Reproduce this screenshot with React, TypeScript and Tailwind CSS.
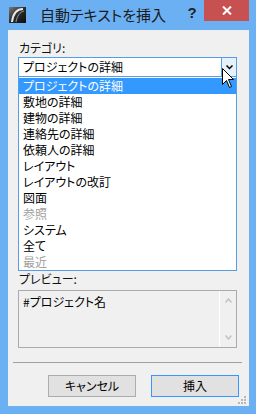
import React from "react";

const JP = { fontFamily: '"Noto Sans CJK JP", "Noto Sans", sans-serif', fontFeatureSettings: '"palt"' };

const ITEMS: { label: string; disabled?: boolean }[] = [
  { label: "プロジェクトの詳細" },
  { label: "敷地の詳細" },
  { label: "建物の詳細" },
  { label: "連絡先の詳細" },
  { label: "依頼人の詳細" },
  { label: "レイアウト" },
  { label: "レイアウトの改訂" },
  { label: "図面" },
  { label: "参照", disabled: true },
  { label: "システム" },
  { label: "全て" },
  { label: "最近", disabled: true },
];

function AppIcon() {
  return (
    <svg width="17" height="16" viewBox="0 0 17 16">
      <defs>
        <linearGradient id="ic" x1="0" y1="0" x2="1" y2="1">
          <stop offset="0" stopColor="#7a7a7a" />
          <stop offset="0.5" stopColor="#2a2a2a" />
          <stop offset="1" stopColor="#0c0c0c" />
        </linearGradient>
      </defs>
      <rect x="0" y="0" width="17" height="16" fill="url(#ic)" />
      <path d="M3 15 C4 7 8 2 14 2" stroke="#e8e8e8" strokeWidth="2" fill="none" />
      <path d="M7 15 C8 9 11 5 15 4" stroke="#9a9a9a" strokeWidth="1" fill="none" />
    </svg>
  );
}

function Cursor() {
  return (
    <svg width="13" height="21" viewBox="0 0 13 21" className="absolute left-[204px] top-[11px] z-20">
      <path
        d="M0.5 0.5 L0.5 16.5 L4.5 12.5 L7.5 19.5 L9.5 18.5 L6.5 11.5 L11.5 11.5 Z"
        fill="#ffffff"
        stroke="#000000"
        strokeWidth="1"
      />
    </svg>
  );
}

export default function App() {
  return (
    <div className="w-[256px] h-[414px] bg-[#6cb0f4] flex flex-col overflow-hidden" style={JP}>
      {/* title bar */}
      <div className="h-[30px] flex items-start shrink-0">
        <div className="pl-[9px] pt-[7px]">
          <AppIcon />
        </div>
        <div className="flex-1 text-center pt-[5px] text-[15px] leading-[20px] text-[#1a1a1a]">
          自動テキストを挿入
        </div>
        <div className="w-[24px] pt-[4px] text-[15px] leading-[18px] font-bold text-[#222] text-center" style={{ fontFamily: '"Liberation Sans", sans-serif' }}>
          ?
        </div>
        <div className="w-[45px] h-[21px] bg-[#c75050] flex items-center justify-center">
          <svg width="10" height="9" viewBox="0 0 10 9">
            <path d="M1 0.5 L9 8.5 M9 0.5 L1 8.5" stroke="#ffffff" strokeWidth="2" />
          </svg>
        </div>
        <div className="w-[7px]" />
      </div>

      {/* client area */}
      <div className="ml-[8px] mr-[7px] mb-[8px] flex-1 bg-[#f0f0f0] pl-[10px] pr-[12px] flex flex-col relative">
        <div className="mt-[10px] pl-[1px] h-[15px] text-[12px] leading-[15px] text-[#111]">カテゴリ:</div>

        <div className="mt-[2px] relative h-[20px]">
          <div className="h-[20px] border border-[#569de5] bg-white flex">
            <div className="flex-1 pl-[4px] text-[12px] leading-[18px] text-black">プロジェクトの詳細</div>
            <div className="w-[15px] bg-[#e5f1fb] border-l border-[#569de5] flex items-center justify-center">
              <svg width="7" height="5" viewBox="0 0 7 5">
                <path d="M0.5 0.5 L3.5 3.5 L6.5 0.5" stroke="#000" strokeWidth="1.5" fill="none" />
              </svg>
            </div>
          </div>
          <div className="absolute left-0 right-0 top-[19px] h-[195px] border border-[#569de5] bg-white z-10 flex flex-col pt-[1px]">
            {ITEMS.map((it, i) => (
              <div
                key={it.label}
                className={
                  "h-[16px] pl-[4px] text-[12px] leading-[16px] " +
                  (i === 0 ? "bg-[#3399ff] text-white" : it.disabled ? "text-[#a0a0a0]" : "text-black")
                }
              >
                {it.label}
              </div>
            ))}
          </div>
          <Cursor />
        </div>

        <div className="h-[194px]" />

        <div className="pl-[1px] h-[15px] text-[12px] leading-[15px] text-[#111]">プレビュー:</div>

        <div className="mt-[4px] h-[58px] border border-[#ababab] flex">
          <div className="flex-1 pl-[4px] pt-[3px] text-[12px] leading-[16px] text-black">#プロジェクト名</div>
          <div className="w-[17px] border-l border-white flex flex-col items-center justify-between py-[7px]">
            <svg width="7" height="5" viewBox="0 0 7 5">
              <path d="M0.5 4.5 L3.5 1 L6.5 4.5" stroke="#c2c2c2" strokeWidth="1.5" fill="none" />
            </svg>
            <svg width="7" height="5" viewBox="0 0 7 5">
              <path d="M0.5 0.5 L3.5 4 L6.5 0.5" stroke="#c2c2c2" strokeWidth="1.5" fill="none" />
            </svg>
          </div>
        </div>

        <div className="mt-[14px] -ml-[5px] -mr-[5px] h-[1px] bg-[#a0a0a0]" />

        <div className="mt-[12px] -mr-[2px] flex justify-end gap-[15px]">
          <div className="w-[88px] h-[22px] border border-[#adadad] bg-[#e1e1e1] text-[12px] leading-[20px] text-center text-black">
            キャンセル
          </div>
          <div className="w-[88px] h-[22px] border border-[#3399ff] bg-[#e1e1e1] text-[12px] leading-[20px] text-center text-black">
            挿入
          </div>
        </div>

        <svg width="8" height="8" viewBox="0 0 8 8" className="absolute right-[3px] bottom-[2px]">
          <rect x="6" y="0" width="2" height="2" fill="#b8b8b8" />
          <rect x="3" y="3" width="2" height="2" fill="#b8b8b8" />
          <rect x="6" y="3" width="2" height="2" fill="#b8b8b8" />
          <rect x="0" y="6" width="2" height="2" fill="#b8b8b8" />
          <rect x="3" y="6" width="2" height="2" fill="#b8b8b8" />
          <rect x="6" y="6" width="2" height="2" fill="#b8b8b8" />
        </svg>
      </div>
    </div>
  );
}
